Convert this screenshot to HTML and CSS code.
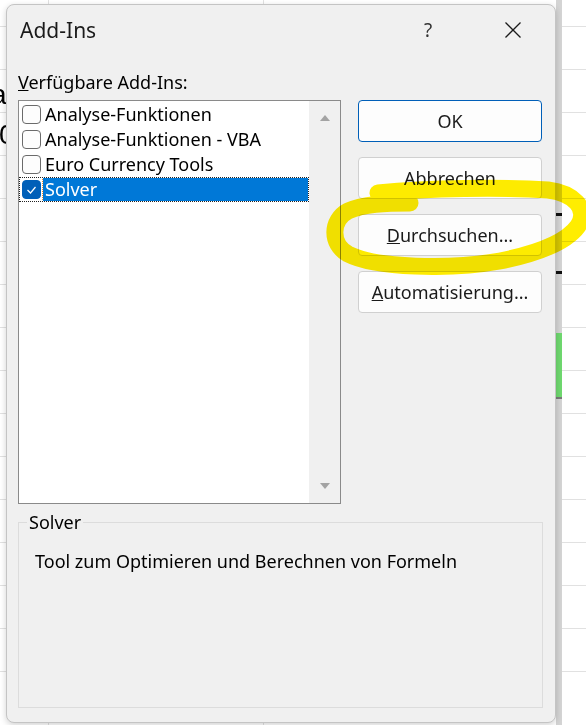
FILE: index.html
```html
<!DOCTYPE html>
<html lang="de">
<head>
  <meta charset="UTF-8">
  <meta name="viewport" content="width=device-width, initial-scale=1.0">
  <title>Add-Ins</title>
  <link rel="stylesheet" href="styles.css">
</head>
<body>
  <div class="sheet">
    <div class="sheet-cells">
      <div class="cell cell-a">a</div>
      <div class="cell cell-num">0</div>
    </div>
  </div>

  <div class="dialog">
    <div class="titlebar">
      <span class="title">Add-Ins</span>
      <span class="help">?</span>
      <span class="close">
        <svg width="16" height="16" viewBox="0 0 16 16">
          <path d="M0.5 0.5 L15.5 15.5 M15.5 0.5 L0.5 15.5" stroke="#1b1b1b" stroke-width="1.3" fill="none"/>
        </svg>
      </span>
    </div>

    <div class="content">
      <div class="left">
        <div class="caption"><u>V</u>erfügbare Add-Ins:</div>
        <div class="listbox">
          <ul class="items">
            <li class="item"><span class="check"></span><span class="name">Analyse-Funktionen</span></li>
            <li class="item"><span class="check"></span><span class="name">Analyse-Funktionen - VBA</span></li>
            <li class="item"><span class="check"></span><span class="name">Euro Currency Tools</span></li>
            <li class="item selected">
              <span class="check checked">
                <svg width="17" height="17" viewBox="0 0 17 17">
                  <polyline points="4.5,9 7.5,12 12.5,6" stroke="#fff" stroke-width="1.2" fill="none"/>
                </svg>
              </span>
              <span class="name">Solver</span>
            </li>
          </ul>
          <div class="scrollbar">
            <span class="arrow up"></span>
            <span class="arrow down"></span>
          </div>
        </div>
      </div>

      <div class="buttons">
        <button class="btn btn-default">OK</button>
        <button class="btn">Abbrechen</button>
        <button class="btn"><u>D</u>urchsuchen...</button>
        <button class="btn"><u>A</u>utomatisierung...</button>
      </div>
    </div>

    <fieldset class="groupbox">
      <legend>Solver</legend>
      <p>Tool zum Optimieren und Berechnen von Formeln</p>
    </fieldset>
  </div>

  <svg class="marker" width="586" height="725" viewBox="0 0 586 725">
    <path d="M378 193 C430 188, 500 187, 548 190 C572 193, 590 208, 578 226 C568 240, 545 252, 500 261 C450 270, 375 268, 348 254 C330 244, 331 220, 348 211 C364 204, 385 203, 410 203"
          stroke="#ffed00" stroke-width="17" stroke-linecap="round" stroke-linejoin="round" fill="none"/>
  </svg>
</body>
</html>
```

FILE: styles.css
```css
* {
  box-sizing: border-box;
}

body {
  margin: 0;
  width: 586px;
  height: 725px;
  overflow: hidden;
  position: relative;
  font-family: 'Noto Sans', sans-serif;
  color: #000;
}

/* spreadsheet behind the dialog: a grey column edge with a green cell
   and the selection border, plus the row and column grid */
.sheet {
  height: 725px;
  background:
    linear-gradient(to bottom, transparent 213px, #111 213px, #111 216px, transparent 216px, transparent 271px, #111 271px, #111 274px, transparent 274px),
    linear-gradient(to bottom, transparent 333px, #6fd86f 333px, #6fd86f 397px, #7a7a7a 397px, #7a7a7a 399px, transparent 399px),
    linear-gradient(#d4d4d4, #d4d4d4),
    linear-gradient(to right, transparent 48px, #e1e1e1 48px, #e1e1e1 49px, transparent 49px, transparent 263px, #e1e1e1 263px, #e1e1e1 264px, transparent 264px),
    repeating-linear-gradient(to bottom, transparent 0, transparent 42px, #e1e1e1 42px, #e1e1e1 43px),
    #fff;
  background-size: 6px 100%, 6px 100%, 6px 100%, 100% 100%, 100% 100%;
  background-position: 556px 0, 556px 0, 556px 0, 0 0, 0 -16px;
  background-repeat: no-repeat, no-repeat, no-repeat, no-repeat, repeat;
}

.sheet-cells {
  padding-top: 75px;
  font-family: 'Liberation Sans', sans-serif;
  font-size: 28px;
  line-height: 40px;
}

.cell-a {
  margin-left: -9px;
}

.cell-num {
  margin-left: -1px;
}

.dialog {
  position: absolute;
  left: 6px;
  top: 4px;
  width: 550px;
  height: 719px;
  background: #f0f0f0;
  border: 1px solid #c4c4c4;
  border-radius: 8px;
  box-shadow: 0 2px 6px rgba(0, 0, 0, 0.18);
  display: flex;
  flex-direction: column;
}

.titlebar {
  height: 50px;
  display: flex;
  align-items: center;
  padding: 0 19px 0 13px;
}

.title {
  flex: 1;
  font-size: 21px;
  color: #1a1a1a;
}

.help {
  width: 40px;
  text-align: center;
  font-size: 19px;
  color: #333;
  margin-right: 42px;
}

.close {
  width: 46px;
  height: 16px;
  display: flex;
  justify-content: center;
}

.content {
  display: flex;
  gap: 17px;
  padding: 16px 13px 0 11px;
}

.left {
  width: 323px;
}

.caption {
  font-size: 18px;
  line-height: 22px;
  margin-bottom: 7px;
}

.listbox {
  height: 404px;
  border: 1px solid #8a8a8a;
  background: #fff;
  display: flex;
}

.items {
  flex: 1;
  list-style: none;
  margin: 0;
  padding: 1px 0 0;
}

.item {
  height: 25px;
  display: flex;
  align-items: center;
  padding-left: 3px;
  font-size: 18px;
}

.check {
  width: 19px;
  height: 19px;
  border: 1px solid #6b6b6b;
  border-radius: 4px;
  background: #fdfdfd;
  display: flex;
}

.check.checked {
  background: #005fb8;
  border-color: #005fb8;
}

.name {
  flex: 1;
  margin: 0 1px 0 2px;
  padding: 0 2px;
  line-height: 23px;
  white-space: nowrap;
}

.item.selected {
  outline: 1px dotted #222;
  outline-offset: -1px;
}

.item.selected .name {
  background: #0078d7;
  color: #fff;
  outline: 1px dotted #f08a24;
}

.scrollbar {
  width: 31px;
  background: #f0f0f0;
  display: flex;
  flex-direction: column;
  justify-content: space-between;
  align-items: center;
  padding: 14px 0;
}

.arrow {
  width: 0;
  height: 0;
  border-left: 5px solid transparent;
  border-right: 5px solid transparent;
}

.arrow.up {
  border-bottom: 6px solid #a3a3a3;
}

.arrow.down {
  border-top: 6px solid #a3a3a3;
}

.buttons {
  width: 184px;
  padding-top: 29px;
  display: flex;
  flex-direction: column;
  gap: 15px;
}

.btn {
  height: 42px;
  border: 1px solid #d0d0d0;
  border-radius: 4px;
  background: #fdfdfd;
  font-family: 'Noto Sans', sans-serif;
  font-size: 18px;
  color: #1a1a1a;
  padding: 0;
}

.btn-default {
  border-color: #005fb8;
}

.groupbox {
  flex: 1;
  margin: 7px 12px 14px 11px;
  padding: 17px 16px;
  border: 1px solid #dcdcdc;
  min-width: 0;
}

.groupbox legend {
  padding: 0 2px;
  margin-left: -8px;
  font-size: 18px;
  line-height: 22px;
}

.groupbox p {
  margin: 0;
  font-size: 18px;
  line-height: 22px;
}

/* highlighter stroke drawn on top */
.marker {
  position: absolute;
  left: 0;
  top: 0;
  pointer-events: none;
  mix-blend-mode: multiply;
}
```
